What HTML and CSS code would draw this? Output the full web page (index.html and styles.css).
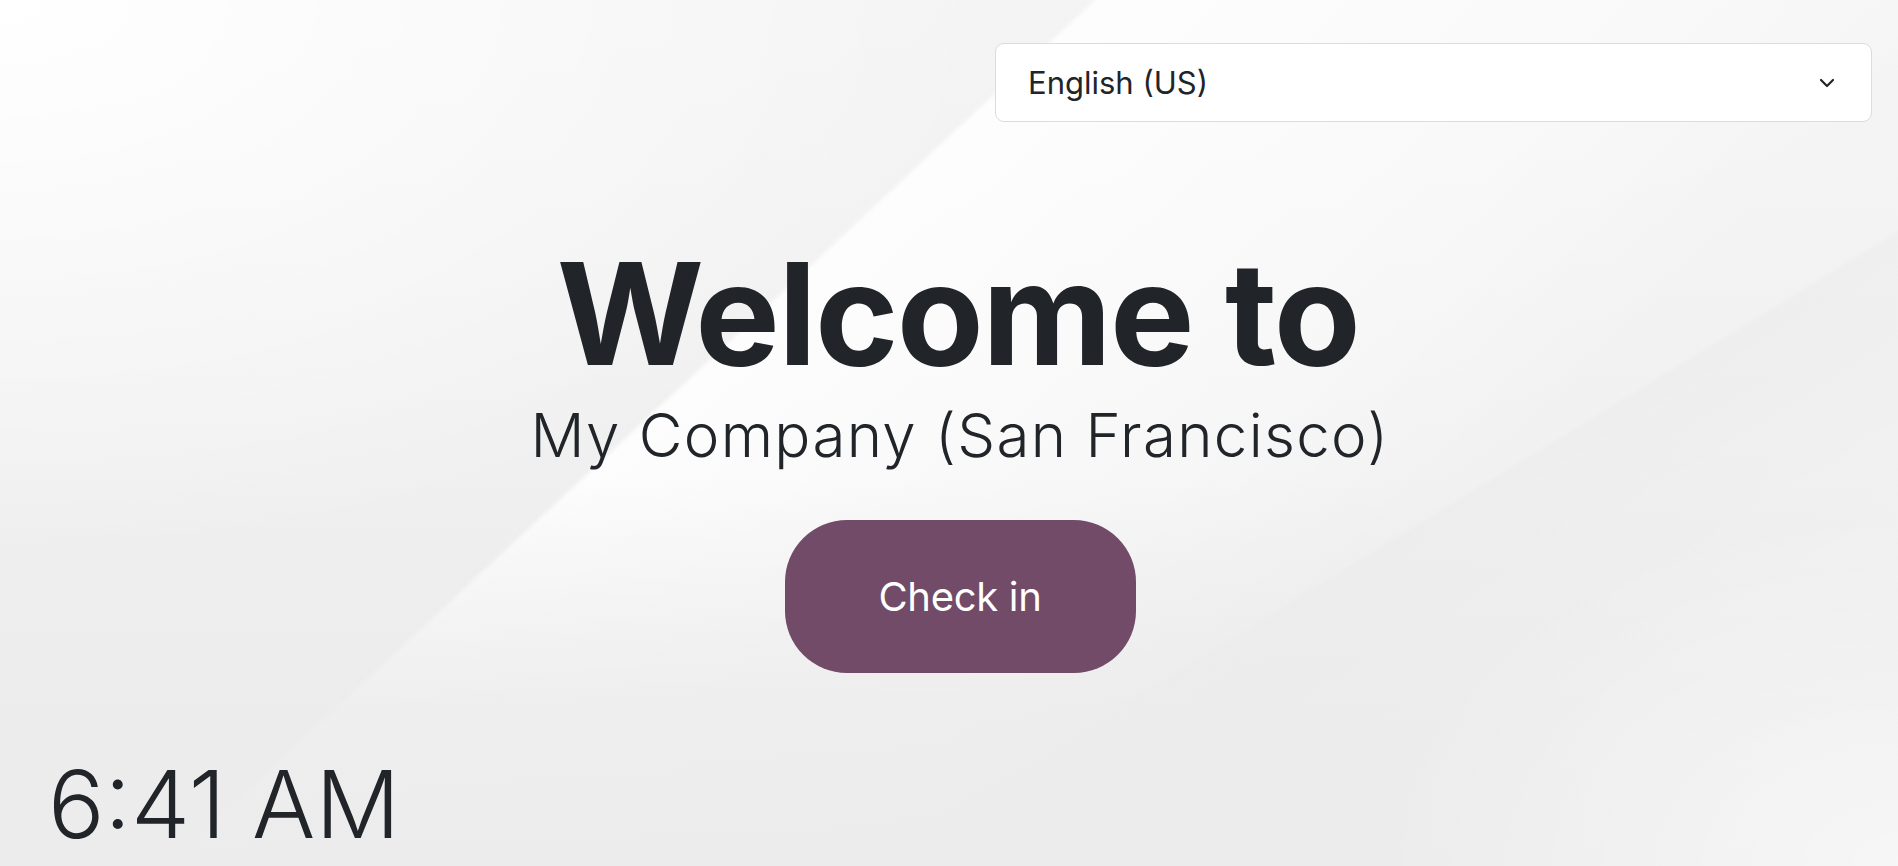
FILE: index.html
```html
<!DOCTYPE html>
<html lang="en">
<head>
<meta charset="utf-8">
<title>Attendance Kiosk</title>
<link rel="stylesheet" href="styles.css">
</head>
<body>
<div class="kiosk">
  <header class="kiosk-header">
    <div class="lang-select">
      <span class="lang-label">English (US)</span>
      <svg class="chevron" width="16" height="10" viewBox="0 0 16 10"><path d="M2 2 L8 8 L14 2" fill="none" stroke="#212529" stroke-width="2.2" stroke-linecap="round" stroke-linejoin="round"/></svg>
    </div>
  </header>
  <main class="kiosk-main">
    <h1 class="welcome">Welcome to</h1>
    <div class="company">My Company (San Francisco)</div>
    <button class="checkin" type="button">Check in</button>
  </main>
  <footer class="kiosk-footer">
    <div class="clock">6:41 AM</div>
  </footer>
</div>
</body>
</html>
```

FILE: styles.css
```css
html, body {
  margin: 0;
  padding: 0;
  height: 100%;
}
body {
  font-family: "Inter", "Noto Sans", sans-serif;
  color: #212529;
  background-color: #ededed;
  background-image:
    radial-gradient(ellipse 520px 360px at 100% 100%, rgba(255,255,255,0.55), rgba(255,255,255,0) 100%),
    linear-gradient(to bottom, rgba(236,236,236,0) 55%, rgba(236,236,236,0.85) 82%, #ececec 100%),
    linear-gradient(148.6deg, rgba(0,0,0,0) 68.5%, rgba(0,0,0,0.014) 68.8%, rgba(0,0,0,0) 84%),
    radial-gradient(ellipse 1000px 560px at 0% 0%, rgba(255,255,255,1), rgba(255,255,255,0) 100%),
    linear-gradient(137deg, rgba(255,255,255,0) 38.6%, rgba(255,255,255,0.85) 38.9%, rgba(255,255,255,0.45) 60%, rgba(255,255,255,0.1) 70%),
    linear-gradient(to bottom, #f4f4f4 0%, #ececec 100%);
  overflow: hidden;
}
.kiosk {
  height: 866px;
  display: flex;
  flex-direction: column;
}
.kiosk-header {
  display: flex;
  justify-content: flex-end;
  padding: 43px 26px 0 0;
}
.lang-select {
  width: 877px;
  height: 79px;
  box-sizing: border-box;
  border: 1px solid #dcdcdc;
  border-radius: 9px;
  background: #ffffff;
  display: flex;
  align-items: center;
  justify-content: space-between;
  padding: 0 36px 0 32px;
}
.lang-label {
  font-size: 31px;
  font-weight: 400;
  color: #212529;
}
.chevron {
  display: block;
}
.kiosk-main {
  display: flex;
  flex-direction: column;
  align-items: center;
  padding-left: 22px;
}
.welcome {
  margin: 120px 0 0 -4px;
  font-size: 142px;
  line-height: 1;
  font-weight: 700;
  letter-spacing: -1.7px;
}
.company {
  margin-top: 15px;
  font-size: 60px;
  line-height: 72px;
  font-weight: 300;
  letter-spacing: 1.3px;
}
.checkin {
  margin-top: 49px;
  width: 351px;
  height: 153px;
  border: none;
  border-radius: 62px;
  background: #714b67;
  color: #ffffff;
  font-family: "Inter", "Noto Sans", sans-serif;
  font-size: 40px;
  font-weight: 400;
  letter-spacing: -0.3px;
  cursor: pointer;
}
.kiosk-footer {
  margin-top: auto;
  padding: 0 0 15px 48px;
}
.clock {
  font-size: 94px;
  line-height: 1;
  font-weight: 300;
}
```
